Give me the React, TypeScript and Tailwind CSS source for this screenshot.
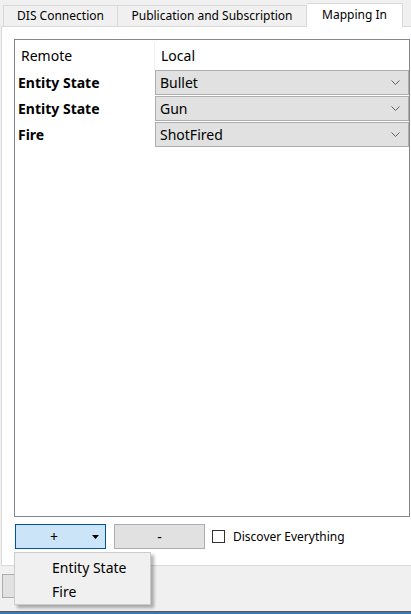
import React from "react";

const font = { fontFamily: '"Noto Sans", "Open Sans", sans-serif' };

function Chevron() {
  return (
    <svg width="9" height="6" viewBox="0 0 9 6" className="shrink-0">
      <path d="M0.5 0.5 L4.5 4.5 L8.5 0.5" fill="none" stroke="#606060" strokeWidth="1" />
    </svg>
  );
}

function Combo({ text }: { text: string }) {
  return (
    <div className="flex h-[25px] w-[254px] items-center justify-between border border-[#adadad] bg-[#e1e1e1] pl-[4px] pr-[8px] text-[14px] text-black">
      <span className="pt-px leading-none">{text}</span>
      <Chevron />
    </div>
  );
}

function Row({ label, value }: { label: string; value: string }) {
  return (
    <div className="flex h-[26px] items-start">
      <div className="flex h-[25px] w-[140px] items-center pl-[3px] pt-px text-[14px] font-bold leading-none text-black">{label}</div>
      <Combo text={value} />
    </div>
  );
}

export default function App() {
  return (
    <div className="relative h-[614px] w-[411px] overflow-hidden bg-[#f0f0f0] text-black" style={font}>
      {/* Tab bar */}
      <div className="flex h-[26px] items-end pl-[3px] text-[12px]">
        <div className="flex h-[21px] w-[114px] items-center justify-center border border-b-0 border-r-0 border-[#d9d9d9] bg-[#f0f0f0]">
          DIS Connection
        </div>
        <div className="flex h-[21px] w-[190px] items-center justify-center border border-b-0 border-[#d9d9d9] bg-[#f0f0f0]">
          Publication and Subscription
        </div>
        <div className="relative z-10 -mb-px flex h-[24px] w-[96px] items-center justify-center border border-b-0 border-l-0 border-[#d9d9d9] bg-white pb-[2px]">
          Mapping In
        </div>
      </div>

      {/* Pane */}
      <div className="ml-px flex h-[540px] w-[430px] flex-col border border-[#d9d9d9] bg-white pl-[12px] pt-[12px]">
        <div className="flex h-[478px] w-[396px] flex-col border border-[#828790] bg-white">
          <div className="flex h-[30px] items-center pt-[2px] text-[14px] leading-none">
            <div className="w-[139px] pl-[6px]">Remote</div>
            <div className="flex h-full flex-1 items-center border-l border-[#f0f0f0] pl-[6px]">Local</div>
          </div>
          <Row label="Entity State" value="Bullet" />
          <Row label="Entity State" value="Gun" />
          <Row label="Fire" value="ShotFired" />
        </div>

        <div className="mt-[7px] flex h-[25px] items-center text-[12px]">
          <div className="ml-px flex h-[25px] w-[91px] items-center border border-[#005499] bg-[#cce4f7]">
            <span className="w-[76px] text-center text-[14px] leading-none">+</span>
            <svg width="7" height="4" viewBox="0 0 7 4">
              <path d="M0 0 L7 0 L3.5 4 Z" fill="#000" />
            </svg>
          </div>
          <div className="ml-[8px] flex h-[25px] w-[91px] items-center justify-center border border-[#adadad] bg-[#e1e1e1] text-[14px] leading-none">
            -
          </div>
          <div className="ml-[7px] h-[13px] w-[13px] border border-[#333333] bg-white" />
          <span className="ml-[8px] pt-px leading-none">Discover Everything</span>
        </div>
      </div>

      {/* Below pane */}
      <div className="ml-[2px] mt-[8px] h-[24px] w-[100px] border border-[#adadad] bg-[#e1e1e1]" />

      <div className="absolute bottom-0 left-0 h-[3px] w-full border-t border-[#5a5a5a] bg-[#3b78b3]" />

      {/* Dropdown menu */}
      <div className="absolute left-[14px] top-[552px] flex h-[53px] w-[137px] flex-col border border-[#cccccc] bg-[#f0f0f0] pt-[2px] text-[14px] shadow-[3px_3px_3px_rgba(0,0,0,0.3)]">
        <div className="flex h-[24px] items-center pl-[37px] pt-px leading-none">Entity State</div>
        <div className="flex h-[24px] items-center pl-[37px] pt-px leading-none">Fire</div>
      </div>
    </div>
  );
}
